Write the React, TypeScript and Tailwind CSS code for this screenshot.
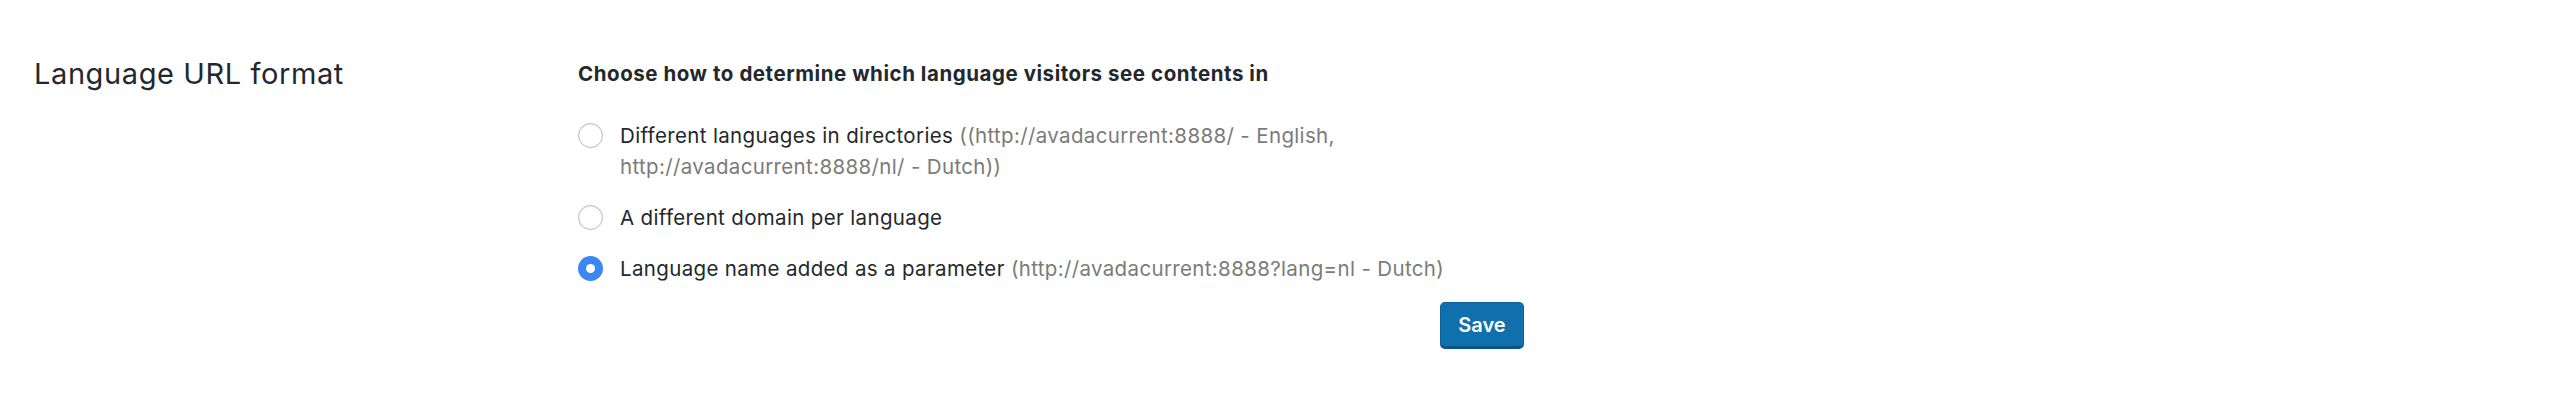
import React from "react";

function Radio({ checked }: { checked?: boolean }) {
  if (checked) {
    return (
      <span className="mt-[3px] mr-[17px] flex h-[25px] w-[25px] shrink-0 items-center justify-center rounded-full bg-[#3a87f4]">
        <span className="h-[9px] w-[9px] rounded-full bg-white" />
      </span>
    );
  }
  return (
    <span className="mt-[3px] mr-[17px] h-[25px] w-[25px] shrink-0 rounded-full border-[1.5px] border-[#bdb9b6] bg-white shadow-[inset_0_1px_2px_rgba(0,0,0,0.08)]" />
  );
}

export default function App() {
  return (
    <div className="min-h-[403px] w-full bg-white font-['Inter','Liberation_Sans',sans-serif] text-[#23282d]">
      <div className="flex pl-[34px] pt-[57px]">
        <div className="w-[544px] shrink-0 text-[29px] leading-[34px] tracking-[0.6px]">
          Language URL format
        </div>
        <div className="w-[946px] pt-[5px]">
          <h3 className="text-[20.5px] font-bold leading-[24px] tracking-[0.55px]">
            Choose how to determine which language visitors see contents in
          </h3>
          <ul className="mt-[34px] flex flex-col gap-[20px] text-[20.5px] leading-[31px] tracking-[0.35px]">
            <li className="flex items-start">
              <Radio />
              <span className="flex-1">
                Different languages in directories{" "}
                <span className="text-[#7b7b7b]">
                  ((http://avadacurrent:8888/ - English, http://avadacurrent:8888/nl/ - Dutch))
                </span>
              </span>
            </li>
            <li className="flex items-start">
              <Radio />
              <span>A different domain per language</span>
            </li>
            <li className="flex items-start">
              <Radio checked />
              <span>
                Language name added as a parameter{" "}
                <span className="text-[#7b7b7b]">(http://avadacurrent:8888?lang=nl - Dutch)</span>
              </span>
            </li>
          </ul>
          <div className="mt-[18px] flex justify-end">
            <button className="h-[47px] w-[84px] rounded-[5px] border border-[#0b6399] border-b-[3px] border-b-[#0a5585] bg-[#0f70ad] text-[20px] font-semibold text-white">
              Save
            </button>
          </div>
        </div>
      </div>
    </div>
  );
}
